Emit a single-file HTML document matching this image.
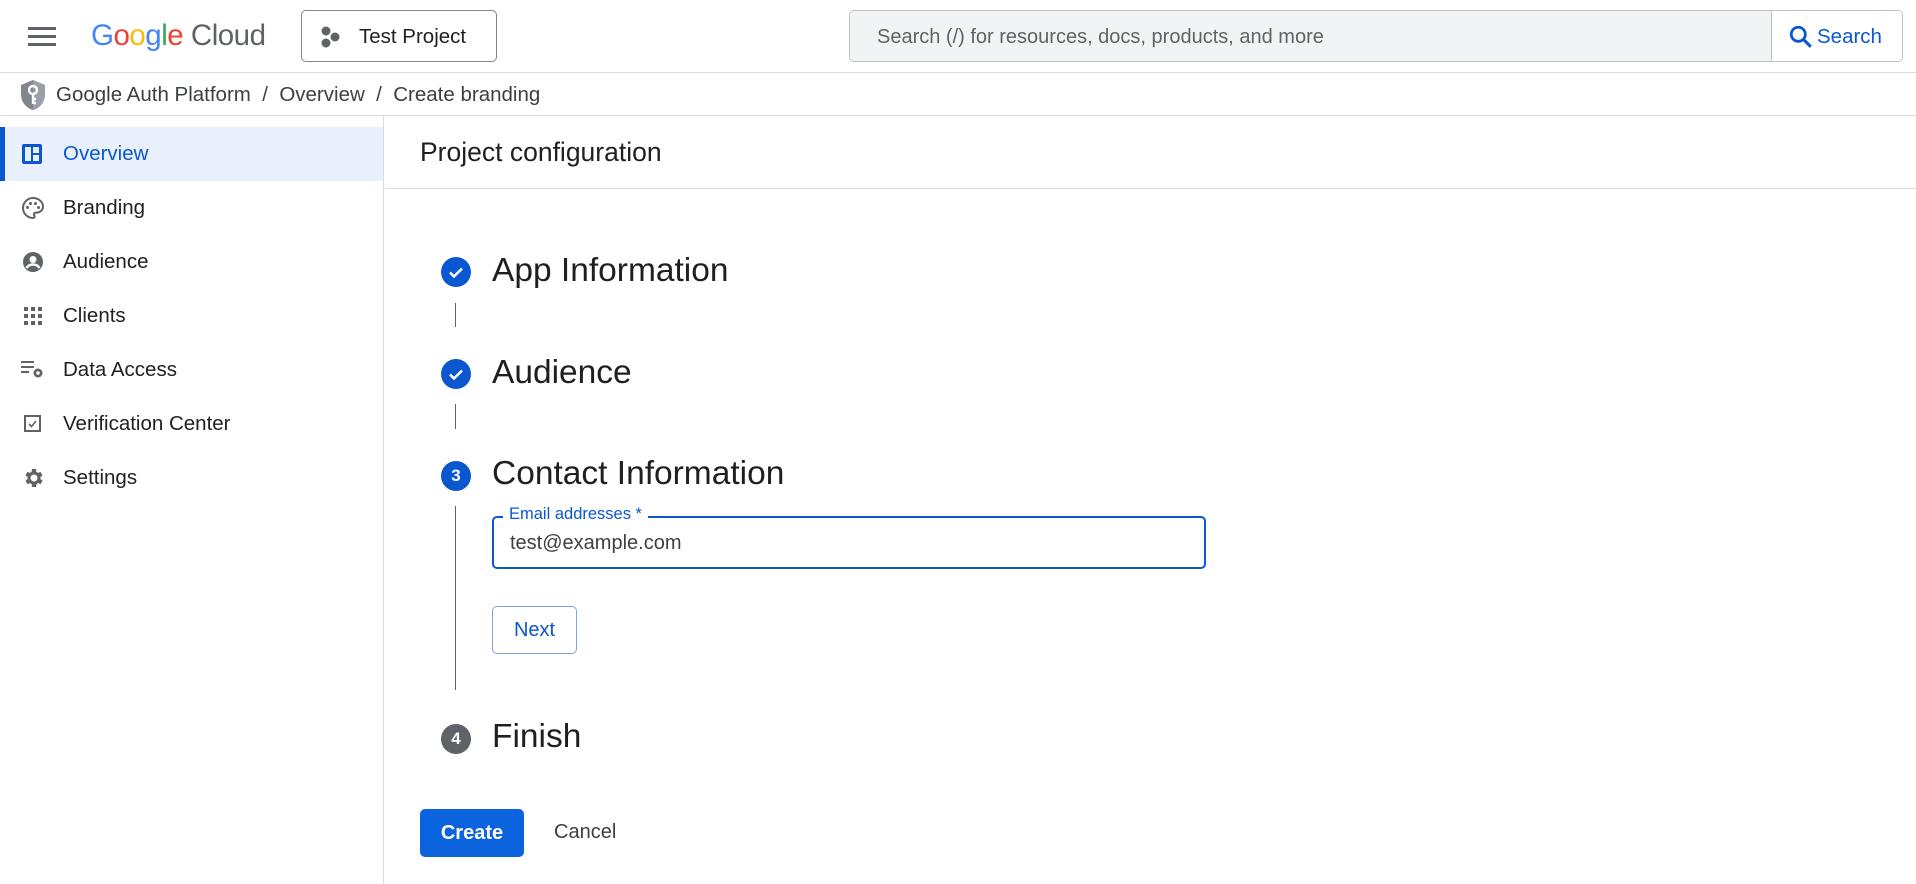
<!DOCTYPE html>
<html><head><meta charset="utf-8"><style>
*{box-sizing:border-box;margin:0;padding:0}
body{width:1916px;height:884px;overflow:hidden;background:#fff;font-family:"Liberation Sans",Arial,sans-serif;color:#202124;position:relative}
.abs{position:absolute}
.hdr{left:0;top:0;width:1916px;height:73px;border-bottom:1px solid #dadce0}
.bc{left:0;top:73px;width:1916px;height:43px;border-bottom:1px solid #dadce0;font-size:20.5px;color:#3c4043}
.side{left:0;top:116px;width:384px;height:768px;border-right:1px solid #dadce0}
.item{position:absolute;left:0;width:383px;height:54px;display:flex;align-items:center;font-size:20.5px;color:#202124}
.item svg{position:absolute;left:21px}
.item span{position:absolute;left:63px}
.sel{background:#e8f0fe;color:#0b57d0}
.sel::before{content:"";position:absolute;left:0;top:0;width:5px;height:54px;background:#0b57d0}
.circ{width:30px;height:30px;border-radius:50%;color:#fff;font-size:17px;font-weight:bold;display:flex;align-items:center;justify-content:center}
.st{font-size:33.5px;color:#1f1f1f}
.vl{width:1px;background:#5f6368;left:455px}
</style></head><body>
<div class="abs hdr">
  <svg class="abs" style="left:28px;top:26px" width="28" height="20" viewBox="0 0 28 20"><rect y="1" width="28" height="3" fill="#5f6368"/><rect y="9" width="28" height="3" fill="#5f6368"/><rect y="17" width="28" height="3" fill="#5f6368"/></svg>
  <div class="abs" style="left:91px;top:19px;font-size:29.5px;letter-spacing:-0.5px"><span style="color:#4285f4">G</span><span style="color:#ea4335">o</span><span style="color:#fbbc05">o</span><span style="color:#4285f4">g</span><span style="color:#34a853">l</span><span style="color:#ea4335">e</span> <span style="color:#5f6368">Cloud</span></div>
  <div class="abs" style="left:301px;top:10px;width:196px;height:52px;border:1px solid #80868b;border-radius:5px;font-size:20.5px;color:#202124">
    <svg class="abs" style="left:19px;top:15px" width="20" height="22" viewBox="0 0 20 22"><circle cx="5" cy="5" r="4.5" fill="#5f6368"/><circle cx="14" cy="11" r="4.5" fill="#5f6368"/><circle cx="5" cy="17" r="4.5" fill="#5f6368"/></svg>
    <span class="abs" style="left:57px;top:14px">Test Project</span>
  </div>
  <div class="abs" style="left:849px;top:10px;width:1054px;height:52px;border:1px solid #bdc1c6;border-radius:5px;background:#f1f3f4;overflow:hidden">
    <span class="abs" style="left:27px;top:15px;font-size:20px;color:#5f6368">Search (/) for resources, docs, products, and more</span>
    <div class="abs" style="left:921px;top:0;width:133px;height:52px;background:#fff;border-left:1px solid #bdc1c6">
      <svg class="abs" style="left:16px;top:13px" width="26" height="26" viewBox="0 0 24 24"><circle cx="9.5" cy="9.5" r="6.5" fill="none" stroke="#0b57d0" stroke-width="2.6"/><path d="M14.5 14.5L21 21" stroke="#0b57d0" stroke-width="2.8"/></svg>
      <span class="abs" style="left:45px;top:14px;font-size:20.5px;color:#0b57d0">Search</span>
    </div>
  </div>
</div>
<div class="abs bc">
  <svg class="abs" style="left:19px;top:6px" width="28" height="32" viewBox="0 0 28 32"><path d="M14 1L2 6v9c0 8 5 14 12 16 7-2 12-8 12-16V6z" fill="#80868b"/><path d="M14 1v30c7-2 12-8 12-16V6z" fill="#9aa0a6"/><circle cx="14" cy="11" r="4" fill="none" stroke="#fff" stroke-width="2.4"/><path d="M14 15v10M14 20h3M14 24h3" stroke="#fff" stroke-width="2.4"/></svg>
  <span class="abs" style="left:56px;top:10px">Google Auth Platform &nbsp;/&nbsp; Overview &nbsp;/&nbsp; Create branding</span>
</div>
<div class="abs side">
  <div class="item sel" style="top:11px"><svg width="22" height="22" viewBox="0 0 22 22"><rect x="1" y="1" width="20" height="20" rx="2" fill="#0b57d0"/><rect x="4" y="4" width="6" height="14" fill="#e8f0fe"/><rect x="12" y="4" width="6" height="6" fill="#e8f0fe"/><rect x="12" y="12" width="6" height="6" fill="#e8f0fe"/></svg><span>Overview</span></div>
  <div class="item" style="top:65px"><svg width="24" height="24" viewBox="0 0 24 24"><path d="M12 2C6.5 2 2 6.5 2 12s4.5 10 10 10c1 0 1.7-.7 1.7-1.6 0-.5-.2-.8-.4-1.1-.3-.3-.4-.7-.4-1.1 0-.9.7-1.6 1.6-1.6H16c3.3 0 6-2.7 6-6C22 5.9 17.5 2 12 2z" fill="none" stroke="#5f6368" stroke-width="2"/><circle cx="6.5" cy="11.5" r="1.5" fill="#5f6368"/><circle cx="9.5" cy="7.5" r="1.5" fill="#5f6368"/><circle cx="14.5" cy="7.5" r="1.5" fill="#5f6368"/><circle cx="17.5" cy="11.5" r="1.5" fill="#5f6368"/></svg><span>Branding</span></div>
  <div class="item" style="top:119px"><svg width="24" height="24" viewBox="0 0 24 24"><circle cx="12" cy="12" r="10" fill="#5f6368"/><circle cx="12" cy="9.5" r="3.5" fill="#fff"/><path d="M5.5 18c1.5-2.5 4-3.5 6.5-3.5s5 1 6.5 3.5" stroke="#fff" stroke-width="2.4" fill="none"/></svg><span>Audience</span></div>
  <div class="item" style="top:173px"><svg width="24" height="24" viewBox="0 0 24 24" fill="#5f6368"><rect x="3" y="3" width="4" height="4"/><rect x="10" y="3" width="4" height="4"/><rect x="17" y="3" width="4" height="4"/><rect x="3" y="10" width="4" height="4"/><rect x="10" y="10" width="4" height="4"/><rect x="17" y="10" width="4" height="4"/><rect x="3" y="17" width="4" height="4"/><rect x="10" y="17" width="4" height="4"/><rect x="17" y="17" width="4" height="4"/></svg><span>Clients</span></div>
  <div class="item" style="top:227px"><svg width="24" height="24" viewBox="0 0 24 24" fill="#5f6368"><rect x="0" y="3" width="13" height="2"/><rect x="0" y="8" width="13" height="2"/><rect x="0" y="13" width="8" height="2"/><circle cx="17" cy="15" r="4.5"/><circle cx="17" cy="15" r="1.8" fill="#fff"/></svg><span>Data Access</span></div>
  <div class="item" style="top:281px"><svg width="24" height="24" viewBox="0 0 24 24"><rect x="4" y="4" width="15" height="15" fill="none" stroke="#5f6368" stroke-width="2"/><path d="M8 12l2.5 2.5L15 9" stroke="#5f6368" stroke-width="1.6" fill="none"/></svg><span>Verification Center</span></div>
  <div class="item" style="top:335px"><svg width="24" height="24" viewBox="0 0 24 24"><path fill="#5f6368" d="M19.4 13a7.5 7.5 0 0 0 0-2l2.1-1.6-2-3.5-2.5 1a7 7 0 0 0-1.7-1L15 3h-4l-.4 2.9a7 7 0 0 0-1.7 1l-2.5-1-2 3.5L6.6 11a7.5 7.5 0 0 0 0 2l-2.1 1.6 2 3.5 2.5-1a7 7 0 0 0 1.7 1L11 21h4l.4-2.9a7 7 0 0 0 1.7-1l2.5 1 2-3.5zM13 15.5a3.5 3.5 0 1 1 0-7 3.5 3.5 0 0 1 0 7z"/></svg><span>Settings</span></div>
</div>
<div class="abs" style="left:385px;top:116px;width:1531px;height:73px;border-bottom:1px solid #dadce0"></div>
<div class="abs" style="left:420px;top:137px;font-size:26.5px;color:#1f1f1f">Project configuration</div>

<div class="abs circ" style="left:441px;top:257px;background:#0b57d0"><svg width="18" height="18" viewBox="0 0 18 18"><path d="M3 9.5l4 4 8-8" stroke="#fff" stroke-width="2.5" fill="none"/></svg></div>
<div class="abs st" style="left:492px;top:252px">App Information</div>
<div class="abs vl" style="top:303px;height:24px"></div>
<div class="abs circ" style="left:441px;top:359px;background:#0b57d0"><svg width="18" height="18" viewBox="0 0 18 18"><path d="M3 9.5l4 4 8-8" stroke="#fff" stroke-width="2.5" fill="none"/></svg></div>
<div class="abs st" style="left:492px;top:354px">Audience</div>
<div class="abs vl" style="top:404px;height:25px"></div>
<div class="abs circ" style="left:441px;top:461px;background:#0b57d0">3</div>
<div class="abs st" style="left:492px;top:455px">Contact Information</div>
<div class="abs vl" style="top:506px;height:184px"></div>

<div class="abs" style="left:492px;top:516px;width:714px;height:53px;border:2.5px solid #0b57d0;border-radius:5px"></div>
<div class="abs" style="left:503px;top:505px;padding:0 6px;background:#fff;font-size:16.5px;color:#0b57d0">Email addresses *</div>
<div class="abs" style="left:510px;top:532px;font-size:20px;color:#3c4043">test@example.com</div>
<div class="abs" style="left:492px;top:606px;width:85px;height:48px;border:1px solid #7fa3e0;border-radius:5px;color:#0b57d0;font-size:20px;display:flex;align-items:center;justify-content:center">Next</div>

<div class="abs circ" style="left:441px;top:724px;background:#5f6368">4</div>
<div class="abs st" style="left:492px;top:718px">Finish</div>

<div class="abs" style="left:420px;top:809px;width:104px;height:48px;background:#0b64de;border-radius:5px;color:#fff;font-size:20px;font-weight:bold;display:flex;align-items:center;justify-content:center">Create</div>
<div class="abs" style="left:554px;top:821px;font-size:20px;color:#3c4043">Cancel</div>
</body></html>
